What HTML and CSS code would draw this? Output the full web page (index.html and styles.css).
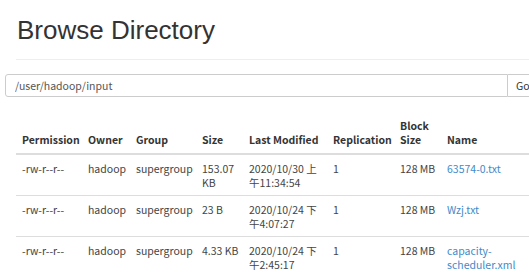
FILE: index.html
```html
<!doctype html>
<html><head>
  <meta charset="utf-8">
  <title>Browse Directory</title>
  <link rel="stylesheet" href="styles.css">
</head><body>
  <div class="page">
    <h1>Browse Directory</h1>
    <hr>
    <form class="path-bar">
      <input class="path-input" type="text" value="/user/hadoop/input">
      <button class="go" type="button">Go!</button>
    </form>
    <table class="files">
      <colgroup>
        <col style="width:66px"><col style="width:48px"><col style="width:66px"><col style="width:47px">
        <col style="width:84px"><col style="width:67px"><col style="width:47px"><col style="width:88px">
      </colgroup>
      <thead>
        <tr>
          <th>Permission</th><th>Owner</th><th>Group</th><th>Size</th>
          <th>Last Modified</th><th>Replication</th><th>Block Size</th><th>Name</th>
        </tr>
      </thead>
      <tbody>
        <tr>
          <td>-rw-r--r--</td><td>hadoop</td><td>supergroup</td><td>153.07 KB</td>
          <td>2020/10/30 上午11:34:54</td><td>1</td><td>128 MB</td><td><a href="#">63574-0.txt</a></td>
        </tr>
        <tr>
          <td>-rw-r--r--</td><td>hadoop</td><td>supergroup</td><td>23 B</td>
          <td>2020/10/24 下午4:07:27</td><td>1</td><td>128 MB</td><td><a href="#">Wzj.txt</a></td>
        </tr>
        <tr>
          <td>-rw-r--r--</td><td>hadoop</td><td>supergroup</td><td>4.33 KB</td>
          <td>2020/10/24 下午2:45:17</td><td>1</td><td>128 MB</td><td><a href="#">capacity-scheduler.xml</a></td>
        </tr>
      </tbody>
    </table>
  </div>
</body></html>
```

FILE: styles.css
```css
html, body {
  margin: 0;
  overflow: hidden;
}

body {
  background: #fff;
  color: #333;
  font: 10.5px/14px "Noto Sans CJK SC", "Noto Sans", sans-serif;
}

.page {
  padding: 0 0 0 16px;
  width: 560px;
}

h1 {
  font: 26px/30px "Liberation Sans", Arial, sans-serif;
  color: #333;
  margin: 0;
  padding: 15px 0 0 1px;
}

hr {
  border: 0;
  border-top: 1px solid #eee;
  margin: 14px 0 14px 0;
}

.path-bar {
  display: flex;
  margin: 0 0 0 -11px;
}

.path-input {
  width: 503px;
  height: 23px;
  box-sizing: border-box;
  border: 1px solid #ccc;
  border-radius: 3px 0 0 3px;
  padding: 0 9px;
  font: 10.5px "Noto Sans CJK SC", sans-serif;
  color: #555;
}

.go {
  height: 23px;
  box-sizing: border-box;
  border: 1px solid #ccc;
  border-left: 0;
  background: #fff;
  padding: 0 8px;
  font: 10.5px "Noto Sans CJK SC", sans-serif;
  color: #333;
}

.files {
  table-layout: fixed;
  width: 513px;
  border-collapse: collapse;
  margin-top: 22px;
}

.files th {
  text-align: left;
  vertical-align: bottom;
  font-weight: bold;
  padding: 0 2px 6px 6px;
  border-bottom: 2px solid #ddd;
}

.files td {
  vertical-align: top;
  padding: 7px 2px 5px 6px;
  border-top: 1px solid #ddd;
  color: #444;
}

.files a {
  color: #428bca;
  text-decoration: none;
}
```
